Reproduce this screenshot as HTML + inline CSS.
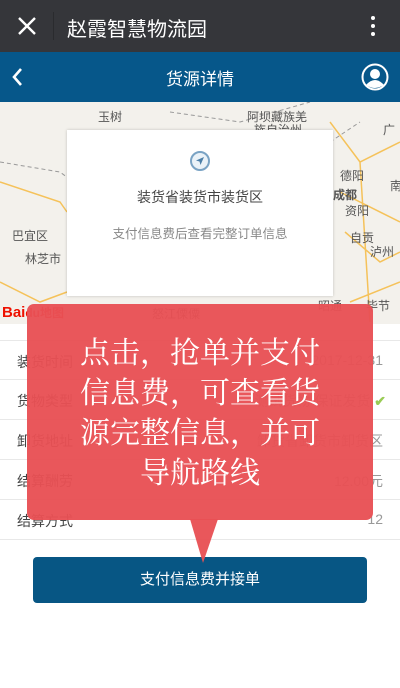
<!DOCTYPE html>
<html><head><meta charset="utf-8"><style>
*{margin:0;padding:0;box-sizing:border-box}
body{width:400px;height:688px;overflow:hidden;background:#fff;font-family:"Liberation Sans","Noto Sans CJK SC",sans-serif;position:relative}
.top{position:absolute;left:0;top:0;width:400px;height:52px;background:#35363a;color:#fff}
.nav{position:absolute;left:0;top:52px;width:400px;height:50px;background:#06578a;color:#fff}
.map{position:absolute;left:0;top:102px;width:400px;height:222px;background:#f3f1ec;overflow:hidden}
.card{position:absolute;left:67px;top:130px;width:266px;height:166px;background:#fff;box-shadow:0 0 3px rgba(0,0,0,.2)}
.row{position:absolute;left:0;width:400px;height:40px;border-bottom:1px solid #e8e8e8;font-size:14px;color:#444}
.row span{position:absolute;top:11px}
.l{left:17px}.r{right:17px;color:#999}
.btn{position:absolute;left:33px;top:557px;width:334px;height:46px;background:#075684;border-radius:4px;color:#fff;font-size:15px;text-align:center;line-height:46px}
.tip{position:absolute;left:27px;top:304px;width:346px;height:216px;background:rgba(232,80,84,.96);border-radius:7px;color:#fff;font-family:"Noto Serif CJK SC",serif;font-size:30px;text-align:center;line-height:40px;padding-top:26px}
.lbl{position:absolute;font-size:12px;color:#555}
</style></head><body>
<div class="top">
<svg style="position:absolute;left:17px;top:16px" width="20" height="20"><path d="M2 2L18 18M18 2L2 18" stroke="#fff" stroke-width="2.4"/></svg>
<div style="position:absolute;left:53px;top:12px;width:1px;height:28px;background:#2a2b2e"></div>
<div style="position:absolute;left:67px;top:13px;font-size:20px">赵霞智慧物流园</div>
<div style="position:absolute;left:371px;top:16px;width:4px;height:4px;border-radius:2px;background:#fff;box-shadow:0 8px 0 #fff,0 16px 0 #fff"></div>
</div>
<div class="nav">
<svg style="position:absolute;left:11px;top:15px" width="12" height="20"><path d="M10 2L3 10L10 18" stroke="#fff" stroke-width="2.6" fill="none"/></svg>
<div style="position:absolute;left:0;width:400px;top:13px;text-align:center;font-size:17px">货源详情</div>
<svg style="position:absolute;left:361px;top:11px" width="28" height="28"><circle cx="14" cy="14" r="12.5" fill="none" stroke="#fff" stroke-width="2"/><circle cx="14" cy="11" r="5" fill="#fff"/><path d="M5 22Q14 12 23 22Q14 28 5 22Z" fill="#fff"/></svg>
</div>
<div class="map">
<svg width="400" height="222" style="position:absolute;left:0;top:0"><g fill="none" stroke="#f5c25a" stroke-width="1.5"><path d="M330 20L360 60L400 40M340 90L400 120M345 130L380 160L400 150M350 200L400 180M0 80L60 100L67 110M0 180L40 200L67 190M360 60L370 220"/></g><g fill="none" stroke="#999" stroke-dasharray="4 3"><path d="M0 60L60 70L100 100M170 10L240 20L310 0M330 40L360 20"/></g></svg>
<div class="lbl" style="left:98px;top:6px">玉树</div>
<div class="lbl" style="left:247px;top:6px">阿坝藏族羌</div>
<div class="lbl" style="left:254px;top:19px">族自治州</div>
<div class="lbl" style="left:383px;top:19px">广</div>
<div class="lbl" style="left:340px;top:65px">德阳</div>
<div class="lbl" style="left:390px;top:75px">南</div>
<div class="lbl" style="left:333px;top:84px;font-weight:bold">成都</div>
<div class="lbl" style="left:345px;top:100px">资阳</div>
<div class="lbl" style="left:350px;top:127px">自贡</div>
<div class="lbl" style="left:370px;top:141px">泸州</div>
<div class="lbl" style="left:12px;top:125px">巴宜区</div>
<div class="lbl" style="left:25px;top:148px">林芝市</div>
<div class="lbl" style="left:318px;top:195px">昭通</div>
<div class="lbl" style="left:366px;top:195px">毕节</div>
<div class="lbl" style="left:152px;top:203px">怒江傈僳</div>
<div style="position:absolute;left:2px;top:202px;font-size:15px;font-weight:bold;color:#e10"><span>Bai</span><span style="font-size:12px">du地图</span></div>
</div>
<div class="card">
<svg style="position:absolute;left:122px;top:20px" width="22" height="22"><circle cx="11" cy="11" r="9" fill="#eaf2f8" stroke="#7aa3c4" stroke-width="2"/><path d="M15 7L7 10.5L10.5 11.5L11.5 15Z" fill="#4c7fa8"/></svg>
<div style="position:absolute;left:0;width:266px;top:57px;text-align:center;font-size:14px;color:#444">装货省装货市装货区</div>
<div style="position:absolute;left:0;width:266px;top:93px;text-align:center;font-size:12.5px;color:#888">支付信息费后查看完整订单信息</div>
</div>
<div class="row" style="top:340px;border-top:1px solid #e8e8e8"><span class="l">装货时间</span><span class="r">2017-12-31</span></div>
<div class="row" style="top:380px"><span class="l">货物类型</span><span class="r" style="right:14px">测试货物 保证发货 <b style="color:#9c5">✔</b></span></div>
<div class="row" style="top:420px"><span class="l">卸货地址</span><span class="r">卸货省卸货市卸货区</span></div>
<div class="row" style="top:460px"><span class="l">结算酬劳</span><span class="r">12.00元</span></div>
<div class="row" style="top:500px"><span class="l">结算方式</span><span class="r">12</span></div>
<div class="btn">支付信息费并接单</div>
<div class="tip">点击，抢单并支付<br>信息费，可查看货<br>源完整信息，并可<br>导航路线</div>
<svg style="position:absolute;left:188px;top:519px" width="32" height="45"><path d="M2 0L30 0L15 44Z" fill="rgba(232,80,84,.96)"/></svg>
</body></html>
